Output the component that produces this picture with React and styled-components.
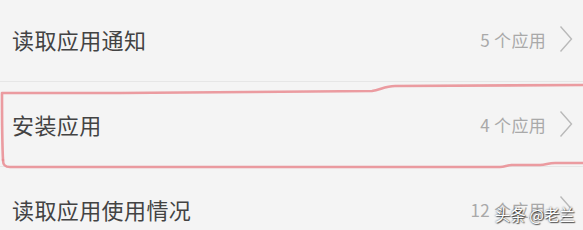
import React from 'react';
import styled, { createGlobalStyle } from 'styled-components';

const GlobalStyle = createGlobalStyle`
	html, body {
		margin: 0;
		padding: 0;
		background: #f4f4f4;
		overflow: hidden;
	}
`;

const Screen = styled.div`
	position: relative;
	width: 583px;
	height: 230px;
	overflow: hidden;
	background: #f4f4f4;
	font-family: "Noto Sans CJK SC", "Noto Sans", sans-serif;
`;

const List = styled.ul`
	list-style: none;
	margin: -3px 0 0 0;
	padding: 0;
`;

const Row = styled.li`
	display: flex;
	align-items: center;
	justify-content: space-between;
	height: 84px;
	padding: 0 10px 0 12px;
	border-bottom: 1px solid #e6e6e6;
`;

const Title = styled.span`
	font-size: 22px;
	color: #434343;
	letter-spacing: 0.4px;
`;

const Meta = styled.div`
	display: flex;
	align-items: center;
	gap: 13px;
`;

const Count = styled.span`
	font-size: 17px;
	color: #a9a9a9;
	letter-spacing: 0.3px;
`;

const Chevron = () => (
	<svg width="14" height="28" viewBox="0 0 14 28">
		<polyline points="1.5,1.5 12.5,14 1.5,26.5" fill="none" stroke="#b9b9b9" strokeWidth="1.4" />
	</svg>
);

// hand-drawn red annotation over the second row
const Annotation = styled.svg`
	position: absolute;
	left: 0;
	top: 0;
	pointer-events: none;
`;

const Watermark = styled.div`
	position: absolute;
	right: 8px;
	bottom: 8px;
	font-size: 15.5px;
	line-height: 1;
	color: #fff;
	text-shadow: 0 0 2px rgba(0, 0, 0, 0.8), 1px 1px 1px rgba(0, 0, 0, 0.6);
`;

const permissions = [
	{ title: '读取应用通知', count: '5 个应用' },
	{ title: '安装应用', count: '4 个应用' },
	{ title: '读取应用使用情况', count: '12 个应用' },
];

export default function App() {
	return (
		<Screen>
			<GlobalStyle />
			<List>
				{permissions.map((item, key) => (
					<Row key={key}>
						<Title>{item.title}</Title>
						<Meta>
							<Count>{item.count}</Count>
							<Chevron />
						</Meta>
					</Row>
				))}
			</List>
			<Annotation width="583" height="230" viewBox="0 0 583 230">
				<path
					d="M3,160 C2,140 2,110 2,93 L120,93 L250,92 L372,91 C380,90 385,86 395,86 L583,85"
					fill="none"
					stroke="#e98b91"
					strokeOpacity="0.85"
					strokeWidth="2.6"
					strokeLinecap="round"
					strokeLinejoin="round"
				/>
				<path
					d="M3,160 C3,165 5,167 10,167 L300,167 L500,167 C505,167 507,165 512,165 L540,165 C546,165 548,163 555,163 L583,163"
					fill="none"
					stroke="#e98b91"
					strokeOpacity="0.85"
					strokeWidth="2.6"
					strokeLinecap="round"
					strokeLinejoin="round"
				/>
			</Annotation>
			<Watermark>头条 @老兰</Watermark>
		</Screen>
	);
}
